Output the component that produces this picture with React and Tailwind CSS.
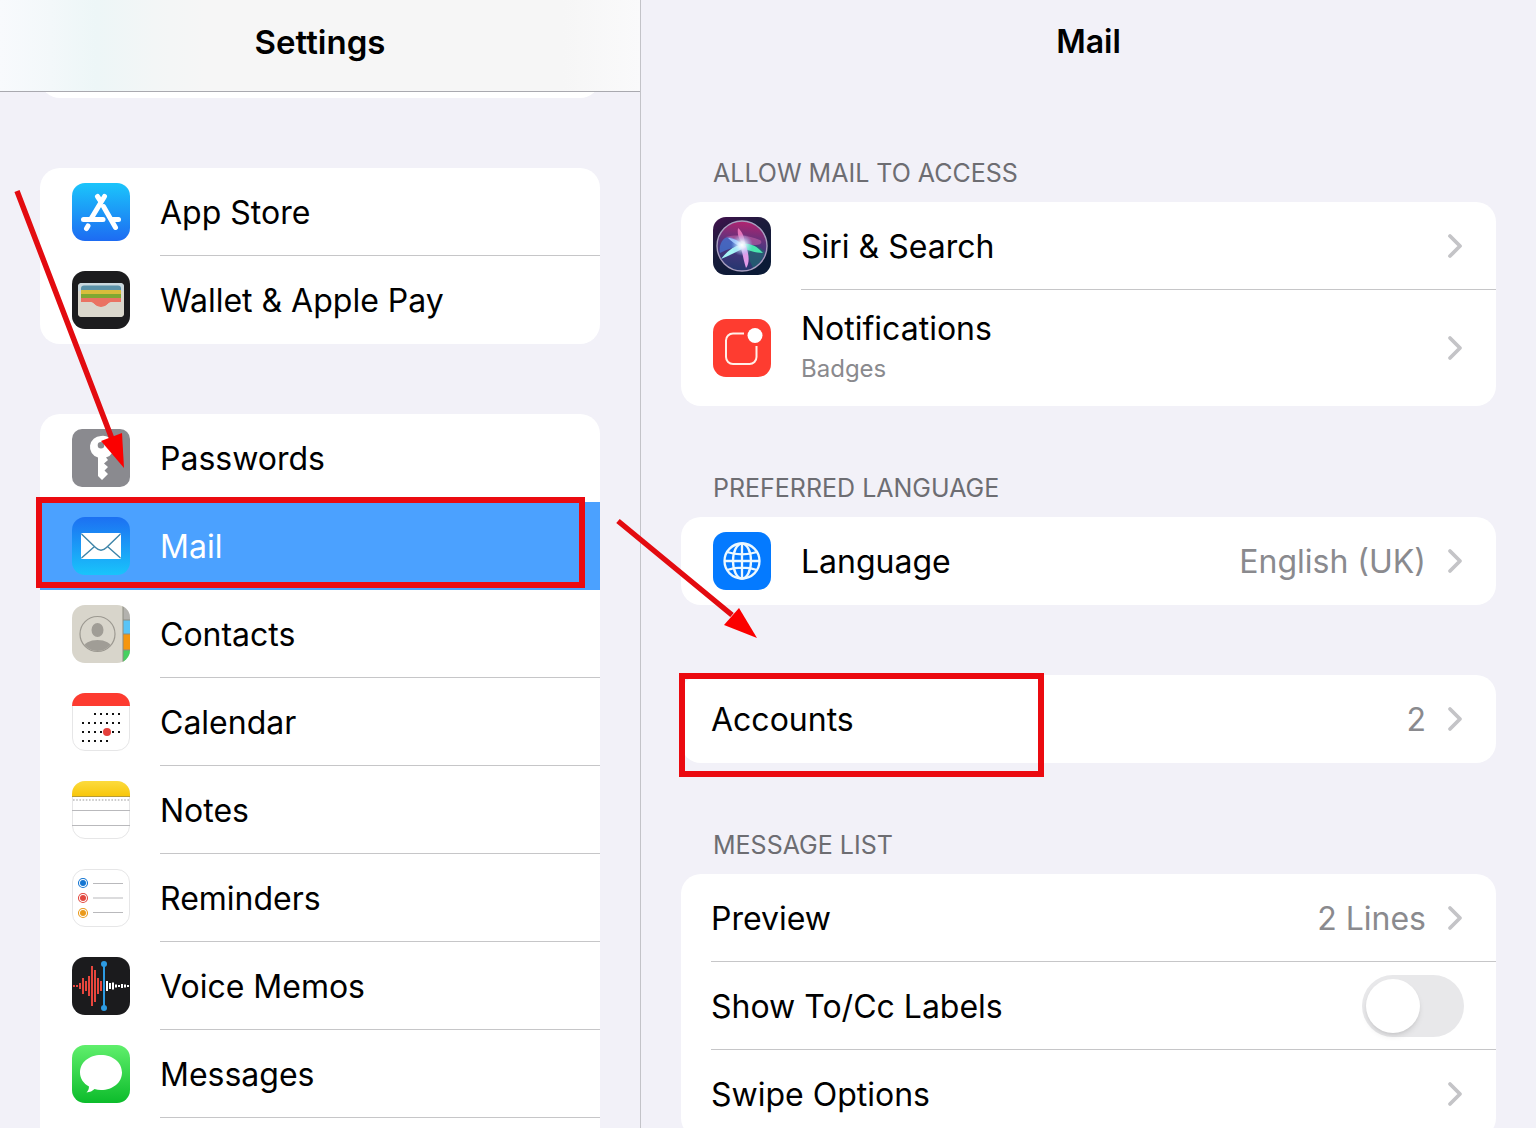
import { useState } from 'react';

function AppStoreIcon() {
  return (
    <>
      <defs>
        <linearGradient id="appstore" x1="0" y1="0" x2="0" y2="1">
          <stop offset="0" stopColor="#1bc5fb" />
          <stop offset="1" stopColor="#1d6bf2" />
        </linearGradient>
      </defs>
      <rect width="58" height="58" rx="13" fill="url(#appstore)" />
      <g stroke="#fff" strokeWidth="5" strokeLinecap="round" fill="none">
        <path d="M32.500 13.500 19.500 35" />
        <path d="M25.500 13.500l3 4.500" />
        <path d="M31.500 23.500 43.500 44.500" />
        <path d="M11.500 36.500H31" />
        <path d="M40 36.500h6.500" />
        <path d="M16 43l-1.500 2.500" />
      </g>
    </>
  );
}

function WalletIcon() {
  return (
    <>
      <rect width="58" height="58" rx="13" fill="#1c1c1e" />
      <rect x="6" y="12" width="46" height="34" rx="4" fill="#dad7cc" />
      <path d="M6 20v-4a4 4 0 0 1 4-4h38a4 4 0 0 1 4 4v4z" fill="#c9d8de" />
      <path d="M9 19v-1.500a3 3 0 0 1 3-3h34a3 3 0 0 1 3 3V19z" fill="#5b92a8" />
      <path d="M9 19h40v4H9z" fill="#d9bd3b" />
      <path d="M9 23h40v4H9z" fill="#7fa832" />
      <path d="M9 27h40v4h-9c-4 0-5 5-11 5s-7-5-11-5H9z" fill="#ea7362" />
      <path d="M6 31h12c4 0 5 5 11 5s7-5 11-5h12v11a4 4 0 0 1-4 4H10a4 4 0 0 1-4-4z" fill="#dad7cc" />
    </>
  );
}

function PasswordsIcon() {
  return (
    <>
      <rect width="58" height="58" rx="10" fill="#8a8a8f" />
      <path
        fillRule="evenodd"
        d="M29 7a11 11 0 0 0-3 21.600V47l4 4 6-6-3.500-3.500L36 38l-4-3.500 4-3.500-2-2.600A11 11 0 0 0 29 7zm0 6a3.300 3.300 0 1 1 0 6.600 3.300 3.300 0 0 1 0-6.600z"
        fill="#fff"
      />
    </>
  );
}

function MailIcon() {
  return (
    <>
      <defs>
        <linearGradient id="mail" x1="0" y1="0" x2="0" y2="1">
          <stop offset="0" stopColor="#1c70f2" />
          <stop offset="1" stopColor="#19c4fb" />
        </linearGradient>
      </defs>
      <rect width="58" height="58" rx="13" fill="url(#mail)" />
      <rect x="9" y="16" width="40" height="26" rx="1.500" fill="#fff" />
      <path d="M9.500 17l14 13.500c3.500 3.500 7.500 3.500 11 0L48.500 17M9.500 41l13-11.500M48.500 41l-13-11.500" stroke="#3c84a8" strokeWidth="1.400" fill="none" />
    </>
  );
}

function ContactsIcon() {
  return (
    <>
      <defs>
        <clipPath id="contacts"><rect width="58" height="58" rx="13" /></clipPath>
        <clipPath id="contacts-face"><circle cx="25.500" cy="29" r="17" /></clipPath>
      </defs>
      <g clipPath="url(#contacts)">
        <rect width="58" height="58" fill="#d8d5cb" />
        <path d="M51 0h7v15h-7z" fill="#b3b2ae" />
        <path d="M51 15h7v14h-7z" fill="#5ac4f7" />
        <path d="M51 29h7v16h-7z" fill="#f6960f" />
        <path d="M51 45h7v13h-7z" fill="#46d060" />
        <path d="M51 0v58M51 15h7M51 29h7M51 45h7" stroke="#8d8c80" strokeWidth="1" />
      </g>
      <circle cx="25.500" cy="29" r="17.500" fill="none" stroke="#9c9991" strokeWidth="1.200" />
      <g clipPath="url(#contacts-face)" fill="#a09d96">
        <ellipse cx="25.500" cy="25" rx="6" ry="7" />
        <ellipse cx="25.500" cy="43" rx="14" ry="8" />
      </g>
    </>
  );
}

const calendarDots = [
  [23, 29, 35, 41, 47],
  [11, 17, 23, 29, 35, 41, 47],
  [11, 17, 23, 29, 41, 47],
  [11, 17, 23, 29, 35],
];

function CalendarIcon() {
  return (
    <>
      <rect x="0.500" y="0.500" width="57" height="57" rx="12.500" fill="#fff" stroke="#e6e6e7" />
      <path d="M0 13A13 13 0 0 1 13 0h32a13 13 0 0 1 13 13z" fill="#fd3b30" />
      {calendarDots.map((row, i) =>
        row.map((x) => <rect key={`${i}-${x}`} x={x - 1} y={20 + i * 9} width="2" height="2" fill="#111" />)
      )}
      <circle cx="35" cy="39" r="4" fill="#e5403c" />
    </>
  );
}

function NotesIcon() {
  return (
    <>
      <defs>
        <linearGradient id="notes" x1="0" y1="0" x2="0" y2="1">
          <stop offset="0" stopColor="#fcdb3e" />
          <stop offset="1" stopColor="#f8c70b" />
        </linearGradient>
      </defs>
      <rect x="0.500" y="0.500" width="57" height="57" rx="12.500" fill="#fff" stroke="#e6e6e7" />
      <path d="M0 15v-2A13 13 0 0 1 13 0h32a13 13 0 0 1 13 13v2z" fill="url(#notes)" />
      <path d="M0 15.500h58" stroke="#b79b36" />
      <path d="M1 19h56" stroke="#bcbcbc" strokeWidth="1.600" strokeDasharray="1.600 1.600" />
      <path d="M0 29.500h58M0 44.500h58" stroke="#b9b9bc" />
    </>
  );
}

function RemindersIcon() {
  return (
    <>
      <rect x="0.500" y="0.500" width="57" height="57" rx="12.500" fill="#fff" stroke="#e6e6e7" />
      {['#1576d2', '#e2483f', '#ea9a1c'].map((color, i) => (
        <g key={color}>
          <circle cx="11" cy={14 + i * 15} r="4.500" fill="none" stroke={color} strokeWidth="1.100" />
          <circle cx="11" cy={14 + i * 15} r="3" fill={color} />
          <path d={`M21 ${14.5 + i * 14.5}h30`} stroke="#b9b9bc" />
        </g>
      ))}
    </>
  );
}

const redBars = [[2, 1], [5, 1], [8, 3], [11, 8], [14, 5], [17, 10], [20, 20], [23, 16], [26, 8], [29, 5]];
const whiteBars = [[35, 5], [38, 3], [41, 3.5], [44, 1.5], [47, 1], [50, 2], [53, 1.5], [56, 1]];

function VoiceMemosIcon() {
  return (
    <>
      <rect width="58" height="58" rx="13" fill="#1b1b1d" />
      {redBars.map(([x, h]) => <path key={x} d={`M${x} ${29 - h}v${h * 2}`} stroke="#e8463d" strokeWidth="2" />)}
      {whiteBars.map(([x, h]) => <path key={x} d={`M${x} ${29 - h}v${h * 2}`} stroke="#fff" strokeWidth="2" />)}
      <path d="M32 7v44" stroke="#2d9be2" strokeWidth="2" />
      <circle cx="32" cy="7" r="3" fill="#2d9be2" />
      <circle cx="32" cy="51" r="3" fill="#2d9be2" />
    </>
  );
}

function MessagesIcon() {
  return (
    <>
      <defs>
        <linearGradient id="messages" x1="0" y1="0" x2="0" y2="1">
          <stop offset="0" stopColor="#60ef6c" />
          <stop offset="1" stopColor="#0cbc2b" />
        </linearGradient>
      </defs>
      <rect width="58" height="58" rx="13" fill="url(#messages)" />
      <path d="M29 10C17 10 8 17.500 8 27.500c0 6 3.500 11 9 14 0 2.500-1 4.500-2.500 6 3.500-.3 6-1.500 8-3.500 2 .6 4.200 1 6.500 1 12 0 21-7.500 21-17.500S41 10 29 10z" fill="#fff" />
    </>
  );
}

function SiriIcon() {
  return (
    <>
      <defs>
        <linearGradient id="siri" x1="0" y1="0" x2="0.500" y2="1">
          <stop offset="0" stopColor="#43104e" />
          <stop offset="0.400" stopColor="#1d1b3c" />
          <stop offset="1" stopColor="#0b1a36" />
        </linearGradient>
        <linearGradient id="siri-orb" x1="0.500" y1="0" x2="0.400" y2="1">
          <stop offset="0" stopColor="#b2236f" />
          <stop offset="0.450" stopColor="#54367f" />
          <stop offset="1" stopColor="#23366f" />
        </linearGradient>
        <radialGradient id="siri-glow">
          <stop offset="0" stopColor="#fff" />
          <stop offset="0.300" stopColor="#e8f4ff" stopOpacity="0.900" />
          <stop offset="1" stopColor="#8ac4ff" stopOpacity="0" />
        </radialGradient>
      </defs>
      <rect width="58" height="58" rx="13" fill="url(#siri)" />
      <circle cx="29" cy="29" r="25" fill="url(#siri-orb)" />
      <path d="M30 29c8-2 16-1 22 6-2 8-6 12-12 16z" fill="#147a6d" opacity="0.500" />
      <path d="M29 28c-7-8-13-9-17-7-5 4-6 10-5 15 8-4 15-6 22-8z" fill="#4179d8" opacity="0.700" />
      <path d="M30 28c-6-5-13-7-17-8 12-3 25-1 34 3 3 2 1 5-4 5z" fill="#d06bb0" opacity="0.500" />
      <path d="M29 27c-8 2-15 7-21 15 9-4 16-7 23-11z" fill="#a5f5f5" />
      <path d="M29 27c7-1 14 1 21 9-8 0-15-3-21-5z" fill="#4ae7ae" />
      <path d="M27 29c3 7 3 13 6 22 4-5 3-14 0-22z" fill="#e19be8" />
      <path d="M31 28c-5-5-7-10-6-17 4 3 7 10 7 17z" fill="#ef7cc0" opacity="0.900" />
      <path d="M29 28c-4-5-9-7-14-7 4 4 8 7 14 9z" fill="#a6caff" opacity="0.900" />
      <circle cx="29" cy="28" r="11" fill="url(#siri-glow)" />
      <circle cx="29" cy="29" r="25" fill="none" stroke="#a99fc0" strokeWidth="1.400" />
    </>
  );
}

function NotificationsIcon() {
  return (
    <>
      <rect width="58" height="58" rx="13" fill="#fe3c30" />
      <path d="M31 14.500H20a7 7 0 0 0-7 7V38a7 7 0 0 0 7 7h16.500a7 7 0 0 0 7-7V27" fill="none" stroke="#fff0e8" strokeWidth="2" />
      <circle cx="42" cy="16.500" r="7.500" fill="#fff" />
    </>
  );
}

function LanguageIcon() {
  return (
    <>
      <rect width="58" height="58" rx="13" fill="#047aff" />
      <g fill="none" stroke="#eef9ff" strokeWidth="2.300">
        <circle cx="29" cy="29" r="17.500" />
        <ellipse cx="29" cy="29" rx="9" ry="17.500" />
        <path d="M29 11v36M11 29h36M14 20c9 3 21 3 30 0M14 38c9-3 21-3 30 0" />
      </g>
    </>
  );
}

function Icon({ art: Art }) {
  return <svg viewBox="0 0 58 58" className="size-[58px] shrink-0" aria-hidden="true"><Art /></svg>;
}

function Chevron() {
  return (
    <svg viewBox="0 0 16 26" className="h-[26px] w-4 shrink-0" aria-hidden="true">
      <path d="M3 3l10 10L3 23" fill="none" stroke="#c4c4c7" strokeWidth="3.800" strokeLinecap="round" strokeLinejoin="round" />
    </svg>
  );
}

function SidebarRow({ icon, label, selected, onSelect, divider = true }) {
  return (
    <button
      type="button"
      onClick={onSelect}
      aria-current={selected ? 'page' : undefined}
      className={`relative flex h-22 w-full items-center gap-[30px] pl-8 text-left ${selected ? 'bg-[#4ba1ff] text-white' : ''}`}
    >
      <Icon art={icon} />
      <span className={`flex h-full flex-1 items-center border-b pt-0.5 ${divider && !selected ? 'border-[#c6c6c8]' : 'border-transparent'}`}>{label}</span>
      {label === 'Mail' && <span className="absolute -top-[5px] right-[15px] bottom-0.5 -left-1 border-6 border-[#eb0a10]" />}
    </button>
  );
}

function DetailRow({ icon, label, sub, value, divider, marked }) {
  return (
    <button type="button" className={`relative flex w-full items-center gap-[30px] text-left ${icon ? 'pl-8' : 'pl-[30px]'} ${sub ? 'h-29' : 'h-22'}`}>
      {icon && <Icon art={icon} />}
      <span className={`flex h-full flex-1 items-center gap-[21px] border-b pr-[33px] ${divider ? 'border-[#c6c6c8]' : 'border-transparent'}`}>
        <span className="flex flex-1 flex-col pt-0.5">
          <span>{label}</span>
          {sub && <span className="text-2xl leading-10 text-[#8a8a8e]">{sub}</span>}
        </span>
        {value && <span className="pt-0.5 text-[#8a8a8e]">{value}</span>}
        <Chevron />
      </span>
      {marked && <span className="absolute -top-0.5 -left-0.5 h-26 w-[365px] border-6 border-[#eb0a10]" />}
    </button>
  );
}

function Section({ title, children }) {
  return (
    <section className="mt-[70px]">
      {title && <h2 className="pb-[17px] pl-8 text-[25px] leading-6 text-[#6d6d72]">{title}</h2>}
      <div className="rounded-[20px] bg-white">{children}</div>
    </section>
  );
}

const groups = [
  [
    { label: 'App Store', icon: AppStoreIcon },
    { label: 'Wallet & Apple Pay', icon: WalletIcon },
  ],
  [
    { label: 'Passwords', icon: PasswordsIcon },
    { label: 'Mail', icon: MailIcon },
    { label: 'Contacts', icon: ContactsIcon },
    { label: 'Calendar', icon: CalendarIcon },
    { label: 'Notes', icon: NotesIcon },
    { label: 'Reminders', icon: RemindersIcon },
    { label: 'Voice Memos', icon: VoiceMemosIcon },
    { label: 'Messages', icon: MessagesIcon },
  ],
];

export default function App() {
  const [selected, setSelected] = useState('Mail');
  const [showLabels, setShowLabels] = useState(false);

  return (
    <div className="relative flex h-screen overflow-hidden bg-[#f2f1f8] font-[Inter,'Liberation_Sans',sans-serif] text-[32px] leading-10 text-black">
      <aside className="flex w-5/12 flex-col overflow-hidden">
        <header className="flex h-23 shrink-0 items-center justify-center border-b border-[#a9a9af] bg-[linear-gradient(90deg,#f8fafd_0%,#f3f8fa_8%,#edf6f7_15%,#f3f6f6_24%,#f6f6f6_32%,#f6f6f6_88%,#fafafb_100%)] pb-2">
          <h1 className="text-[33px] font-semibold">Settings</h1>
        </header>
        <div className="px-10">
          <div className="flex h-1.5 items-end overflow-hidden">
            <div className="h-20 w-full shrink-0 rounded-[20px] bg-white" />
          </div>
          {groups.map((items, g) => (
            <nav key={g} className="mt-[70px] rounded-[20px] bg-white last:pb-22">
              {items.map((item, i) => (
                <SidebarRow
                  key={item.label}
                  icon={item.icon}
                  label={item.label}
                  selected={item.label === selected}
                  onSelect={() => setSelected(item.label)}
                  divider={items[i + 1] ? items[i + 1].label !== selected : g === 1}
                />
              ))}
            </nav>
          ))}
        </div>
      </aside>

      <main className="flex-1 overflow-hidden border-l border-[#c3c3c8] px-10">
        <header className="flex h-[91px] items-center justify-center pb-2">
          <h1 className="font-semibold">Mail</h1>
        </header>
        <Section title="ALLOW MAIL TO ACCESS">
          <DetailRow icon={SiriIcon} label="Siri & Search" divider />
          <DetailRow icon={NotificationsIcon} label="Notifications" sub="Badges" />
        </Section>
        <Section title="PREFERRED LANGUAGE">
          <DetailRow icon={LanguageIcon} label="Language" value="English (UK)" />
        </Section>
        <Section>
          <DetailRow label="Accounts" value="2" marked />
        </Section>
        <Section title="MESSAGE LIST">
          <DetailRow label="Preview" value="2 Lines" divider />
          <div className="h-22 pl-[30px]">
            <div className="flex h-full items-center justify-between border-b border-[#c6c6c8] pr-8">
              <label htmlFor="show-labels" className="pt-0.5">Show To/Cc Labels</label>
              <input
                id="show-labels"
                type="checkbox"
                role="switch"
                checked={showLabels}
                onChange={(e) => setShowLabels(e.target.checked)}
                className="h-[62px] w-[102px] appearance-none rounded-full bg-[#e8e8ea] p-1 before:block before:size-[54px] before:rounded-full before:bg-white before:shadow-md checked:bg-[#34c759] checked:before:ml-10"
              />
            </div>
          </div>
          <DetailRow label="Swipe Options" />
        </Section>
      </main>

      <svg viewBox="0 0 800 700" className="pointer-events-none absolute top-0 left-0 h-[700px] w-[800px]" aria-hidden="true">
        <path d="M17 191l95 248M618 521l114 94" stroke="#e30b10" strokeWidth="5.500" />
        <path d="M101 441l21-8 2 35z" fill="#fb0000" />
        <path d="M739 608l18 30-33-13z" fill="#fb0000" />
      </svg>
    </div>
  );
}
